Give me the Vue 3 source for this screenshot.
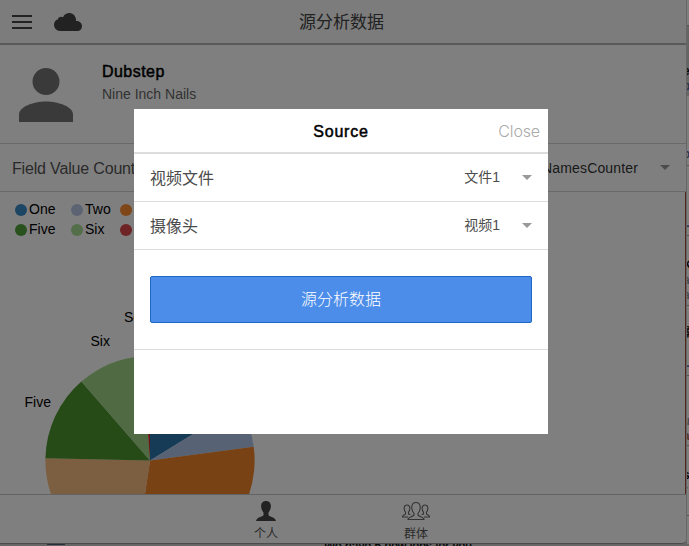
<script setup>
const legend = [
  ['One', '#3b8ac8'], ['Two', '#b8c9e8'], ['Three', '#ff8f30'],
  ['Five', '#51a23a'], ['Six', '#a8dc95'], ['Seven', '#dd494b'],
]
const cx = 150
const cy = 268.5
const r = 104.6
const point = (deg) => {
  const a = (deg * Math.PI) / 180
  return `${(cx + r * Math.sin(a)).toFixed(2)} ${(cy - r * Math.cos(a)).toFixed(2)}`
}
const slices = [
  [0, 58.5, '#2c77ae'], [58.5, 82.5, '#aec7e8'], [82.5, 188.5, '#f0852b'], [188.5, 271.3, '#f9bd82'],
  [271.3, 319, '#4c962f'], [319, 356, '#a0d488'], [356, 360, '#d62728'],
].map(([from, to, color]) => ({
  color,
  d: `M${cx} ${cy}L${point(from)}A${r} ${r} 0 0 1 ${point(to)}Z`,
}))
const fields = [['视频文件', '文件1'], ['摄像头', '视频1']]
</script>

<template>
  <div class="desktop">
    <div class="window-row">
      <main class="app">
        <header class="bar">
          <svg class="menu" viewBox="0 0 20 16"><path d="M0 2h20M0 8h20M0 14h20" /></svg>
          <svg class="cloud" viewBox="0 0 28 18"><path d="M6 18a6 6 0 0 1-6-6c0-3 1.500-5 4-5.700C4 4 7 3 9 4.300 11-1 19-2 21.500 4.500c.4 1 .6 2 .5 3.500 3.500 0 6 2 6 5s-2 5-5 5z" /></svg>
          <h1>源分析数据</h1>
        </header>
        <section class="profile">
          <svg class="avatar" viewBox="0 0 54 54"><circle cx="27" cy="13.500" r="13.500" /><path d="M0 54V46.500C0 39 14 33.500 27 33.500S54 39 54 46.500V54Z" /></svg>
          <div class="names">
            <h2>Dubstep</h2>
            <p>Nine Inch Nails</p>
          </div>
        </section>
        <section class="counter">
          <span class="counter-label">Field Value Counter</span>
          <span class="counter-value">NamesCounter</span>
          <i class="caret"></i>
        </section>
        <section class="chart">
          <svg viewBox="0 0 686 302">
            <g v-for="([name, color], i) in legend" :key="name">
              <circle :cx="[21, 77, 126][i % 3]" :cy="i < 3 ? 18 : 38" r="6" :fill="color" />
              <text :x="[29, 85, 134][i % 3]" :y="i < 3 ? 22 : 42">{{ name }}</text>
            </g>
            <path v-for="s in slices" :key="s.color" :d="s.d" :fill="s.color" />
            <text x="24.500" y="215">Five</text>
            <text x="90.500" y="154">Six</text>
            <text x="124" y="130">Seven</text>
          </svg>
        </section>
        <nav class="tabs">
          <a class="tab">
            <svg class="person" viewBox="0 0 20 20"><path d="M10 0c3.600 0 5.200 2.700 4.800 6-.2 2.400-1.200 4.200-2.300 5.500v2.700c1 1.400 6.800 1.800 7.500 5.800H0c.7-4 6.500-4.400 7.500-5.800v-2.700C6.400 10.200 5.400 8.400 5.200 6 4.800 2.700 6.400 0 10 0z" /></svg>
            <span>个人</span>
          </a>
          <a class="tab">
            <svg class="group" viewBox="0 0 28 20">
              <path d="M6 18.500c0-3 5.500-2.500 6-4.500v-1.500c-3-3.500-3.500-11 2-11s5 7.500 2 11V14c.5 2 6 1.500 6 4.500z" />
              <path d="M8.500 13.500 6.500 13v-2c2-2.200 2-7-1.500-7S1.500 8.800 3.500 11v2C3 14 .5 13.500.5 16H6M19.500 13.500l2-.5v-2c-2-2.200-2-7 1.500-7s3.500 4.800 1.500 7v2c.5 1 3 .5 3 3H22" />
            </svg>
            <span>群体</span>
          </a>
        </nav>
      </main>
      <aside class="page-edge">
        <div class="edge top"></div>
        <div class="edge selected"><b>e</b><b class="blue">p</b></div>
        <div class="edge first"><b class="blue">o</b></div>
        <div class="edge entry"><b class="blue">L</b></div>
        <div class="edge entry tall"><b>K</b><b class="faint">a</b><b class="faint">a</b></div>
        <div class="edge entry double"><b>影</b><b class="blue">L</b></div>
        <div class="edge entry low"><b class="faint">u</b><b class="brown">a</b></div>
        <div class="edge entry tall"><b>s</b><b class="brown">r</b></div>
        <div class="edge rest"></div>
      </aside>
    </div>
    <footer class="underlay">
      <i class="chip"></i>
      <span>We have 5 new jobs for you.</span>
    </footer>

    <div class="backdrop">
      <section class="dialog">
        <header class="dialog-head"><h2>Source</h2><span class="close">Close</span></header>
        <div v-for="[label, value] in fields" :key="label" class="field">
          <span class="label">{{ label }}</span>
          <span class="value">{{ value }}</span>
          <i class="caret"></i>
        </div>
        <div class="action"><button>源分析数据</button></div>
      </section>
    </div>
  </div>
</template>

<style>
body { margin: 0; }
</style>

<style scoped>
* { box-sizing: border-box; }
h1, h2, p { margin: 0; font-weight: 400; }
svg { display: block; flex: none; }
.desktop {
  position: relative;
  width: 689px;
  height: 546px;
  overflow: hidden;
  background: #ccc;
  font-family: "Liberation Sans", "Noto Sans CJK SC", sans-serif;
}
.window-row { display: flex; height: 544px; background: #ccc; }
.app {
  display: flex;
  flex-direction: column;
  width: 687px;
  height: 544px;
  overflow: hidden;
  background: #fff;
  border-bottom: 1px solid #999;
  border-right: 1px solid #ccc;
  border-bottom-right-radius: 5px;
}
.bar {
  display: flex;
  align-items: center;
  flex: none;
  height: 45px;
  padding-left: 12px;
  background: #f8f8f8;
  border-bottom: 2px solid #b2b2b2;
}
.menu { width: 20px; height: 16px; stroke: #444; stroke-width: 2; }
.cloud { width: 28px; height: 18px; margin-left: 22px; fill: #444; }
.bar h1 { margin-left: 217px; padding-top: 3px; font-size: 17px; line-height: 42px; color: #444; }
.profile { display: flex; flex: none; height: 98px; padding: 23px 19px 0; }
.avatar { width: 54px; height: 54px; fill: #757575; }
.names { padding-left: 29px; margin-top: -7px; }
.names h2 { font-size: 16px; line-height: 22px; color: #000; -webkit-text-stroke: .5px #000; letter-spacing: .45px; }
.names p { padding-top: 1px; font-size: 14px; line-height: 20px; color: #666; }
.counter {
  display: flex;
  align-items: center;
  flex: none;
  height: 49px;
  padding: 0 16px 0 12px;
  border-top: 1px solid #d2d2d2;
  border-bottom: 1px solid #d2d2d2;
}
.counter-label { font-size: 16px; color: #555; padding-top: 2px; letter-spacing: -.17px; }
.counter-value { margin-left: auto; margin-right: 22px; font-size: 14px; color: #333; letter-spacing: .15px; }
.caret { border: 5px solid transparent; border-top-color: #999; border-bottom: 0; }
.chart { flex: none; height: 302px; overflow: hidden; border-right: 1px solid #a04a35; }
.chart svg { width: 686px; height: 302px; font-size: 14px; }
.tabs { display: flex; justify-content: center; height: 49px; border-top: 1px solid #c7c7c7; }
.tab { display: flex; flex-direction: column; align-items: center; width: 150px; padding-top: 6px; color: #555; font-size: 12px; line-height: 18px; }
.tab:first-child { margin-left: -4px; }
.tab span { padding-top: 4px; }
.person { width: 20px; height: 20px; fill: #444; }
.group { width: 28px; height: 20px; fill: none; stroke: #666; stroke-width: 1.100; }
.page-edge { width: 2px; height: 544px; overflow: hidden; background: #fff; }
.edge { width: 2px; overflow: hidden; border-bottom: 1px solid #aaa; font-size: 12px; line-height: 15px; white-space: nowrap; }
.edge b { display: block; margin-left: -4px; color: #111; }
.edge .blue { color: #456ca8; }
.edge .faint { color: #888; font-weight: 400; }
.edge .brown { color: #a97560; }
.edge.top { height: 26px; }
.edge.selected { height: 70px; padding-top: 38px; background: #ccc; border: 0; }
.edge.first { height: 70px; padding-top: 51px; }
.edge.entry { height: 70px; padding-top: 50px; }
.edge.entry.tall { padding-top: 22px; }
.edge.entry.low { padding-top: 38px; }
.edge.entry.double { padding-top: 20px; }
.edge.entry.double b + b { margin-top: 15px; }
.edge.rest { height: 40px; border: 0; }
.underlay { display: flex; height: 2px; overflow: hidden; background: #ccc; }
.chip { width: 18px; height: 1px; margin-left: 47px; background: #535e72; flex: none; }
.underlay span { margin-left: 259px; margin-top: -6px; font-size: 12px; line-height: 16px; color: #000; white-space: nowrap; -webkit-text-stroke: .3px; }
.backdrop {
  position: absolute;
  inset: 0;
  display: flex;
  justify-content: center;
  padding-top: 109px;
  padding-right: 7px;
  background: rgba(0, 0, 0, .5);
}
.dialog { width: 414px; height: 325px; background: #fff; }
.dialog-head { display: grid; grid-template-columns: 1fr auto 1fr; align-items: center; height: 45px; padding-right: 8px; padding-left: 8px; border-bottom: 2px solid #ddd; }
.dialog-head h2 { grid-column: 2; padding-top: 2px; font-size: 16px; color: #000; -webkit-text-stroke: .5px #000; letter-spacing: .8px; }
.close { justify-self: end; font: 300 16px Inter, sans-serif; letter-spacing: -.15px; color: #aaa; }
.field { display: flex; align-items: center; height: 48px; padding: 0 16px; border-bottom: 1px solid #ddd; color: #4c4c4c; }
.label { font-size: 16px; padding-bottom: 1px; }
.value { margin-left: auto; margin-right: 22px; padding-bottom: 3px; font-size: 14px; }
.action { height: 100px; padding: 26px 16px 0; border-bottom: 1px solid #ddd; }
.action button { display: block; width: 100%; height: 47px; padding: 0 0 3px; border: 1px solid #1d67c5; border-radius: 2px; background: #4c8dea; color: #fff; font: 300 16px "Noto Sans CJK SC", sans-serif; }
</style>
